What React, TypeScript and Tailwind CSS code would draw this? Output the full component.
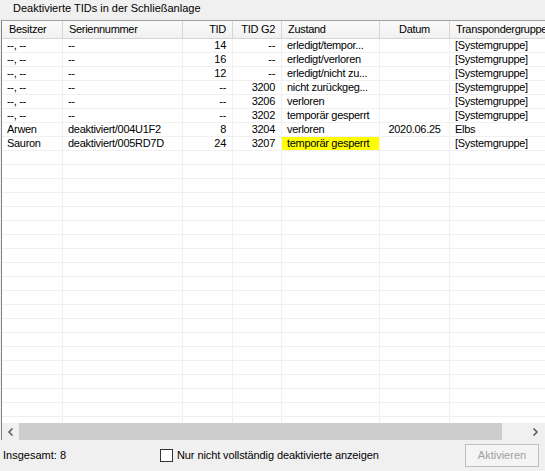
const FONT = { fontFamily: '"Liberation Sans", Arial, sans-serif' }

type Row = {
  owner: string
  serial: string
  tid: string
  tidG2: string
  state: string
  date: string
  group: string
  highlight?: boolean
}

const rows: Row[] = [
  { owner: '--, --', serial: '--', tid: '14', tidG2: '--', state: 'erledigt/tempor...', date: '', group: '[Systemgruppe]' },
  { owner: '--, --', serial: '--', tid: '16', tidG2: '--', state: 'erledigt/verloren', date: '', group: '[Systemgruppe]' },
  { owner: '--, --', serial: '--', tid: '12', tidG2: '--', state: 'erledigt/nicht zu...', date: '', group: '[Systemgruppe]' },
  { owner: '--, --', serial: '--', tid: '--', tidG2: '3200', state: 'nicht zurückgeg...', date: '', group: '[Systemgruppe]' },
  { owner: '--, --', serial: '--', tid: '--', tidG2: '3206', state: 'verloren', date: '', group: '[Systemgruppe]' },
  { owner: '--, --', serial: '--', tid: '--', tidG2: '3202', state: 'temporär gesperrt', date: '', group: '[Systemgruppe]' },
  { owner: 'Arwen', serial: 'deaktiviert/004U1F2', tid: '8', tidG2: '3204', state: 'verloren', date: '2020.06.25', group: 'Elbs' },
  { owner: 'Sauron', serial: 'deaktiviert/005RD7D', tid: '24', tidG2: '3207', state: 'temporär gesperrt', date: '', group: '[Systemgruppe]', highlight: true },
]

const EMPTY_ROWS = 20

function HeaderCell({ w, align = 'left', first, children }: { w: string; align?: 'left' | 'right' | 'center'; first?: boolean; children: React.ReactNode }) {
  const alignCls = align === 'right' ? 'justify-end pr-[6px]' : align === 'center' ? 'justify-center' : first ? 'pl-[7px]' : 'pl-[6px]'
  return (
    <div className={`${w} shrink-0 h-full flex items-center border-r border-r-[#d5d5d5] whitespace-nowrap overflow-hidden ${alignCls}`}>
      {children}
    </div>
  )
}

function Cell({ w, align = 'left', yellow, children }: { w: string; align?: 'left' | 'right' | 'center'; yellow?: boolean; children?: React.ReactNode }) {
  const alignCls = align === 'right' ? 'justify-end pr-[6px]' : align === 'center' ? 'justify-center' : 'pl-[5px]'
  return (
    <div className={`${w} shrink-0 h-full flex items-center border-r border-r-[#f0f0f0] whitespace-nowrap overflow-hidden ${alignCls} ${yellow ? 'bg-[#ffff00]' : ''}`}>
      {children}
    </div>
  )
}

export default function App() {
  return (
    <div style={FONT} className="w-[545px] h-[471px] bg-[#f0f0f0] overflow-hidden flex flex-col text-black">
      {/* Title */}
      <div className="h-[20px] pl-[13px] text-[11px] leading-[16px]">Deaktivierte TIDs in der Schließanlage</div>

      {/* List view */}
      <div className="h-[420px] ml-px border-t border-t-[#a0a0a0] border-l border-l-[#828282] flex flex-col bg-white overflow-hidden text-[11px] tracking-[-0.3px]">
        {/* Header */}
        <div className="h-[18px] shrink-0 flex bg-gradient-to-b from-[#fafafa] to-[#f1f1f1] border-b border-b-[#d5d5d5] leading-[13px]">
          <HeaderCell w="w-[61px]" first>Besitzer</HeaderCell>
          <HeaderCell w="w-[120px]">Seriennummer</HeaderCell>
          <HeaderCell w="w-[50px]" align="right">TID</HeaderCell>
          <HeaderCell w="w-[49px]" align="right">TID G2</HeaderCell>
          <HeaderCell w="w-[98px]">Zustand</HeaderCell>
          <HeaderCell w="w-[70px]" align="center">Datum</HeaderCell>
          <HeaderCell w="w-[130px]">Transpondergruppe</HeaderCell>
        </div>

        {/* Body */}
        <div className="flex-1 overflow-hidden leading-[13px]">
          {rows.map((r, i) => (
            <div key={i} className="h-[14px] flex border-b border-b-[#f0f0f0]">
              <Cell w="w-[61px]">{r.owner}</Cell>
              <Cell w="w-[120px]">{r.serial}</Cell>
              <Cell w="w-[50px]" align="right">{r.tid}</Cell>
              <Cell w="w-[49px]" align="right">{r.tidG2}</Cell>
              <Cell w="w-[98px]" yellow={r.highlight}>{r.state}</Cell>
              <Cell w="w-[70px]" align="center">{r.date}</Cell>
              <Cell w="w-[130px]">{r.group}</Cell>
            </div>
          ))}
          {Array.from({ length: EMPTY_ROWS }).map((_, i) => (
            <div key={`e${i}`} className="h-[14px] flex border-b border-b-[#f0f0f0]">
              <Cell w="w-[61px]" />
              <Cell w="w-[120px]" />
              <Cell w="w-[50px]" />
              <Cell w="w-[49px]" />
              <Cell w="w-[98px]" />
              <Cell w="w-[70px]" />
              <Cell w="w-[130px]" />
            </div>
          ))}
        </div>

        {/* Horizontal scrollbar */}
        <div className="h-[17px] shrink-0 flex bg-[#f0f0f0]">
          <div className="w-[17px] h-full flex items-center justify-center">
            <svg width="8" height="8" viewBox="0 0 8 8">
              <path d="M5.5 0.5 L2 4 L5.5 7.5" fill="none" stroke="#606060" strokeWidth="1.6" />
            </svg>
          </div>
          <div className="w-[483px] h-full bg-[#cdcdcd]" />
          <div className="flex-1" />
          <div className="w-[17px] h-full flex items-center justify-center mr-[2px]">
            <svg width="8" height="8" viewBox="0 0 8 8">
              <path d="M2.5 0.5 L6 4 L2.5 7.5" fill="none" stroke="#606060" strokeWidth="1.6" />
            </svg>
          </div>
        </div>
      </div>

      {/* Bottom bar */}
      <div className="flex-1 flex items-center text-[11px]">
        <span className="ml-[3px] w-[57px]">Insgesamt:</span>
        <span className="w-[100px]">8</span>
        <span className="w-[13px] h-[13px] border border-[#333333] bg-white shrink-0" />
        <span className="ml-[4px] tracking-[-0.1px]">Nur nicht vollständig deaktivierte anzeigen</span>
        <button
          type="button"
          disabled
          className="ml-auto mr-[6px] w-[74px] h-[23px] border border-[#bfbfbf] bg-[#f4f4f4] text-[#a0a0a0] text-[11px]"
          style={FONT}
        >
          Aktivieren
        </button>
      </div>
    </div>
  )
}
